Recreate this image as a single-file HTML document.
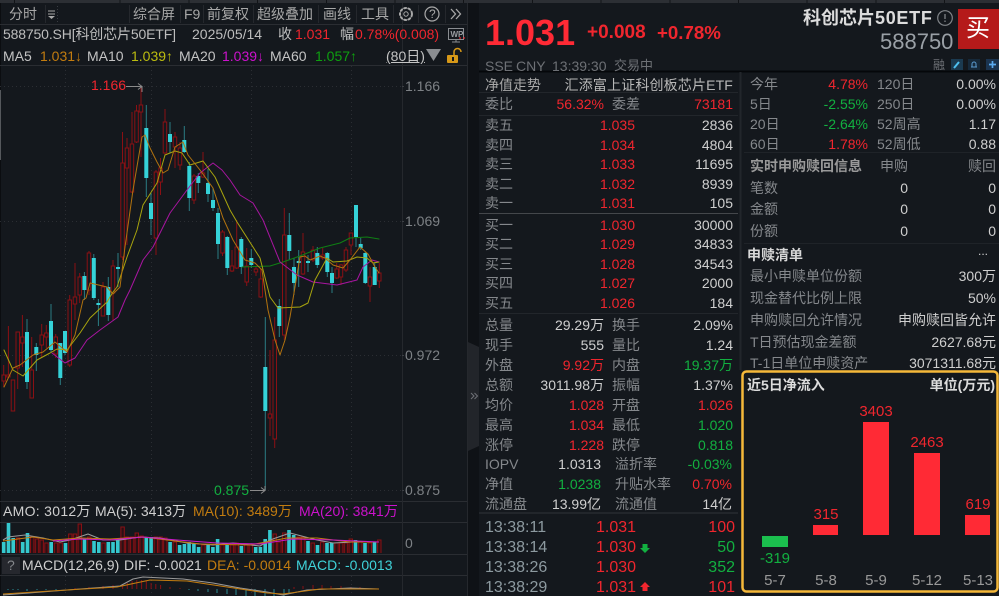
<!DOCTYPE html>
<html lang="zh"><head><meta charset="utf-8"><title>588750</title>
<style>
html,body{margin:0;padding:0;background:#14181d}
#p{position:relative;width:999px;height:596px;overflow:hidden;background:#14181d;font-family:"Liberation Sans","Noto Sans CJK SC",sans-serif;font-size:14px;color:#c8c8c8;filter:blur(.3px)}
#p div.t{position:absolute;white-space:nowrap;line-height:20px;height:20px}
.g{color:#85888c}.w{color:#cfcfcf}.r{color:#f0262e}.n{color:#12b040}.h{color:#a8a8a8}
.o{color:#c27c10}.y{color:#bcbc10}.m{color:#cc12cc}.c{color:#3fd2d8}
.b{font-weight:bold}
svg{position:absolute;left:0;top:0}
</style></head><body><div id="p">
<div style="position:absolute;left:0;top:0;width:999px;height:3px;background:repeating-linear-gradient(90deg,#2c2f34 0,#2c2f34 67.7px,#121417 67.7px,#121417 68.7px);background-position:52px 0"></div>
<div style="position:absolute;left:468px;top:3px;width:11px;height:593px;background:#0f1216"></div>
<div style="position:absolute;left:0;top:3px;width:1px;height:593px;background:#0b0d10"></div>
<div style="position:absolute;left:0;top:90px;width:1px;height:70px;background:#55585c"></div>

<svg width="999" height="596" viewBox="0 0 999 596">
<polygon points="468,342 479,347 479,446 468,451" fill="#22252a"/>
<path d="M0 24.5H467M0 65.5H467M0 501.5H467M0 522.5H467M0 554.5H467M0 575.5H467" stroke="#2a2d32" fill="none"/>
<path d="M402.5 3V596M467.5 3V596M45.5 5V23M129.5 5V23M180.5 5V23M203.5 5V23M253.5 5V23M318.5 5V23M356.5 5V23M393.5 5V23M418.5 5V23M445.5 5V23" stroke="#25282d" fill="none"/>
<path d="M0 86.5H402M0 221.5H402M0 355.5H402M0 490.5H402M65.5 66V501M151.5 66V501M251.5 66V501M351.5 66V501M65.5 523V554M151.5 523V554M251.5 523V554M351.5 523V554M65.5 576V596M151.5 576V596M251.5 576V596M351.5 576V596" stroke="#2b2e33" stroke-dasharray="1 3" fill="none"/>
<path d="M402 86.5h2M402 221.5h2M402 355.5h2M402 490.5h2" stroke="#3c3f44"/>

<!-- red wicks -->
<path fill="none" stroke="#8a1014" d="M3.7 365V387M8.4 326V378M17.7 332V389M22.4 315V367M31.7 337V398M41.7 324V358M46.3 325V348M55.7 334V358M69.7 295V367M75 263V320M79.7 273V303M89 251V295M103 282V316M113 260V320M122.5 132V260M127 138V245M132 112V193M136.5 105V143M141 86V157M156 170V255M160.5 158V195M165 109V155M175 132V168M180 142V170M194 174V204M203 152V178M222.5 230V256M232 250V272M236.7 220V269M246.7 248V286M256 267V276M260.7 268V298M270 350V436M274.7 317V448M284.3 208V340M303 233V275M313 246V262M322.7 248V260M336.7 263V279M341 264V285M346 247V272M351 233V255M370 267V302M379.3 263V288"/>
<!-- red bodies -->
<path fill="#14181d" stroke="#8a1014" d="M2 375h3.5V381h-3.5zM6.6 375h3.5V377h-3.5zM11.2 380h3.5V411h-3.5zM16 332h3.5V368h-3.5zM20.6 337h3.5V343h-3.5zM30 370h3.5V398h-3.5zM40 335h3.5V345h-3.5zM44.6 333h3.5V337h-3.5zM54 337h3.5V354h-3.5zM68 300h3.5V365h-3.5zM73.2 297h3.5V304h-3.5zM78 277h3.5V295h-3.5zM87.2 253h3.5V290h-3.5zM101.2 287h3.5V316h-3.5zM111.2 266h3.5V293h-3.5zM120.8 163h3.5V257h-3.5zM125.2 148h3.5V168h-3.5zM130.2 144h3.5V192h-3.5zM134.8 111h3.5V142h-3.5zM139.2 105h3.5V112h-3.5zM154.2 172h3.5V238h-3.5zM158.8 168h3.5V182h-3.5zM163.2 122h3.5V153h-3.5zM173.2 137h3.5V147h-3.5zM178.2 148h3.5V165h-3.5zM192.2 176h3.5V200h-3.5zM201.2 173h3.5V177h-3.5zM220.8 232h3.5V253h-3.5zM230.2 266h3.5V271h-3.5zM235 247h3.5V268h-3.5zM245 266h3.5V282h-3.5zM254.2 269h3.5V272h-3.5zM259 279h3.5V297h-3.5zM268.2 414h3.5V418h-3.5zM273 340h3.5V439h-3.5zM282.5 235h3.5V335h-3.5zM301.2 252h3.5V274h-3.5zM311.2 250h3.5V260h-3.5zM321 255h3.5V258h-3.5zM335 269h3.5V278h-3.5zM339.2 265h3.5V277h-3.5zM344.2 250h3.5V270h-3.5zM349.2 233h3.5V245h-3.5zM368.2 277h3.5V286h-3.5zM377.5 273h3.5V281h-3.5z"/>
<!-- cyan wicks -->
<path fill="none" stroke="#2a7d84" d="M27 319V389M36.3 343V371M51 304V352M60.3 343V385M65 331V355M84.4 272V300M93.8 254V300M98.4 299V326M108.3 277V321M118 253V287M146.3 105V197M151 193V235M170 122V153M184.3 126V153M189.3 162V211M198.3 173V193M208 169V202M213 188V211M218 208V259M227.3 236V275M241.3 237V274M251.3 249V268M265.3 317V490M279.3 299V337M289.3 213V260M294 258V295M298.7 250V287M308 255V272M317.3 247V268M327.3 252V277M332 267V293M356 205V247M360.7 238V250M365.3 252V284M374.7 263V285"/>
<!-- cyan bodies -->
<path fill="#35d2d8" d="M25 332h4V382h-4zM34.3 347h4V355h-4zM49 321h4V350h-4zM58.3 343h4V378h-4zM63 331h4V353h-4zM82.4 276h4V290h-4zM91.8 258h4V298h-4zM96.4 303h4V305h-4zM106.3 287h4V315h-4zM116 267h4V269h-4zM144.3 128h4V178h-4zM149 203h4V219h-4zM168 134h4V142h-4zM182.3 140h4V152h-4zM187.3 166h4V198h-4zM196.3 176h4V183h-4zM206 183h4V194h-4zM211 200h4V208h-4zM216 213h4V244h-4zM225.3 237h4V268h-4zM239.3 239h4V267h-4zM249.3 258h4V265h-4zM263.3 367h4V411h-4zM277.3 306h4V326h-4zM287.3 235h4V251h-4zM292 267h4V283h-4zM296.7 261h4V263h-4zM306 261h4V263h-4zM315.3 253h4V265h-4zM325.3 253h4V272h-4zM330 273h4V283h-4zM354 205h4V237h-4zM358.7 244h4V248h-4zM363.3 253h4V283h-4zM372.7 267h4V285h-4z"/>
<!-- MA lines -->
<g fill="none" stroke-width="1" stroke-linejoin="round" stroke-linecap="round">
<polyline stroke="#0f7f14" points="242,267 270,266 283,262 300,256 320,248 340,243 350,238 367,237 379,239"/>
<polyline stroke="#a815a0" points="52,353 65,363 75,358 87,340 100,330 118,317 125,300 130,290 143,260 153,247 170,213 187,190 200,173 213,163 222,170 230,180 240,195 253,203 263,220 280,262 297,275 313,282 337,285 357,280 363,267 372,260 379,262"/>
<polyline stroke="#a8a40e" points="4,350 13,370 23,376 37,360 50,353 57,349 67,350 80,333 90,318 107,302 113,292 117,287 127,257 137,230 143,205 157,183 165,155 175,151 182,153 190,165 203,161 215,177 230,210 237,222 260,258 270,297 278,308 300,307 308,303 315,280 327,258 333,262 347,261 357,257 367,258 373,263 379,262"/>
<polyline stroke="#b1720f" points="4,387 13,368 20,365 33,355 43,352 55,342 67,352 75,335 83,300 86,298 90,283 107,287 113,294 120,287 125,247 133,190 142,137 145,135 150,148 157,162 163,173 168,170 175,147 183,142 188,155 200,170 213,188 223,218 233,240 245,260 255,263 262,270 268,310 275,340 280,355 285,340 290,317 300,257 305,256 310,260 320,256 325,258 333,265 343,268 350,260 360,247 368,254 375,267 379,273"/>
</g>
<!-- arrows -->
<path d="M126 86.5H142V92M138 83.5L142 86.5L138 89.5" fill="none" stroke="#8a8a8a"/>
<path d="M250 490.5H265V486M261 487.5L265 490.5L261 493.5" fill="none" stroke="#8a8a8a"/>
<!-- volume -->
<path fill="none" stroke="#35c8ce" stroke-width="3.6" d="M3.7 553V542M8.5 553V523M13.2 553V538M22.7 553V542M27.5 553V533M51.2 553V542M65.5 553V543M84.5 553V539M94 553V541M98.8 553V542M108.3 553V542M113 553V542M117.8 553V539M146.3 553V537M151.1 553V537M170.1 553V542M179.6 553V545M184.4 553V544M189.1 553V542M193.9 553V544M198.6 553V547M208.1 553V545M212.9 553V547M217.6 553V539M227.1 553V545M241.4 553V546M255.7 553V547M260.4 553V547M265.2 553V539M269.9 553V530M289 553V530M293.7 553V535M308 553V541M317.5 553V545M327 553V543M331.7 553V543M355.5 553V540M365 553V543M374.5 553V542"/>
<path fill="#2c1014" stroke="#8a1014" d="M16.3 553V538h3.4V553M30.5 553V537h3.4V553M35.3 553V539h3.4V553M40 553V540h3.4V553M44.8 553V543h3.4V553M54.3 553V543h3.4V553M59 553V543h3.4V553M68.6 553V534h3.4V553M73.3 553V534h3.4V553M78.1 553V524h3.4V553M87.6 553V537h3.4V553M101.8 553V543h3.4V553M120.9 553V527h3.4V553M125.6 553V537h3.4V553M130.4 553V537h3.4V553M135.1 553V533h3.4V553M139.9 553V536h3.4V553M154.1 553V537h3.4V553M158.9 553V537h3.4V553M163.6 553V538h3.4V553M173.1 553V542h3.4V553M201.7 553V545h3.4V553M220.7 553V545h3.4V553M230.2 553V545h3.4V553M235 553V543h3.4V553M244.5 553V545h3.4V553M249.2 553V545h3.4V553M273 553V534h3.4V553M277.7 553V542h3.4V553M282.5 553V533h3.4V553M296.8 553V537h3.4V553M301.5 553V537h3.4V553M311 553V543h3.4V553M320.5 553V542h3.4V553M334.8 553V543h3.4V553M339.5 553V543h3.4V553M344.3 553V543h3.4V553M349.1 553V539h3.4V553M358.6 553V542h3.4V553M368.1 553V543h3.4V553M377.6 553V540h3.4V553"/>
<g fill="none" stroke-width="1.1" stroke-linejoin="round">
<polyline stroke="#9a9a9a" points="3,540 8,537 25,535 43,538 60,542 70,540 88,534 103,540 120,540 140,537 160,538 187,543 213,545 233,543 260,546 270,540 290,533 317,540 333,543 353,542 379,542"/>
<polyline stroke="#c27c10" points="3,541 33,537 53,540 80,538 110,539 143,537 167,540 200,544 250,545 287,538 317,538 350,542 379,542"/>
<polyline stroke="#c818c8" points="53,541 80,539 110,540 143,537 177,540 217,543 260,544 293,539 333,540 379,542"/>
</g>
<!-- macd -->
<path fill="none" stroke="#8a1014" d="M75 589V588M89 589V587M103 589V586M113 589V585M122.6 589V584M127.3 589V583M132.1 589V581M136.8 589V580M141.6 589V580M146.3 589V581M151.1 589V583M155.8 589V584M160.6 589V585M170 589V587M180 589V588M294 589V587M303 589V586M313 589V585M322 589V585M331 589V586M341 589V586M351 589V587M360 589V587"/>
<path fill="none" stroke="#2a8d92" d="M8 589V590M13 589V590M18 589V590M27 589V591M37 589V590M46 589V590M56 589V590M189 589V590M198 589V591M208 589V592M217 589V593M227 589V594M236 589V595M246 589V596M255 589V596M265 589V596M274 589V596M284 589V596M289 589V593"/>
<g fill="none" stroke-width="1.1" stroke-linejoin="round">
<polyline stroke="#9a9a9a" points="3,595 67,590 120,586 133,579 143,577 183,579 213,583 240,588 267,592 283,595 307,590 350,588 379,589"/>
<polyline stroke="#c27c10" points="3,594 67,590 117,587 150,580 187,581 227,587 267,593 283,594 320,589 379,589"/>
</g>
<!-- toolbar icons -->
<path d="M48 11h7M48 14h7" stroke="#a8a8a8" fill="none"/><polygon points="48,16 55,16 51.5,19" fill="#a8a8a8"/>
<path d="M57.5 6V23" stroke="#3a3d42" stroke-dasharray="1 2"/>
<circle cx="406" cy="14" r="6" fill="none" stroke="#a8a8a8" stroke-width="2" stroke-dasharray="3 1.3"/><circle cx="406" cy="14" r="6" fill="none" stroke="#a8a8a8" stroke-width=".8"/><circle cx="406" cy="14" r="2.2" fill="none" stroke="#a8a8a8"/>
<circle cx="432" cy="14" r="7" fill="none" stroke="#a8a8a8" stroke-width="1.2"/>
<path d="M451 9l4.500 5l-4.500 5M456 9l4.500 5l-4.500 5" fill="none" stroke="#a8a8a8" stroke-width="1.3"/>
<!-- WP monitor -->
<rect x="448.500" y="28.500" width="15" height="11" fill="none" stroke="#8a8d91"/>
<text x="450.500" y="37" font-family="Liberation Sans" font-size="8" font-weight="bold" fill="#9a9da1">WP</text>
<path d="M452 42h8M456 40v2" stroke="#8a8d91" fill="none"/>
<circle cx="460" cy="38" r="0.9" fill="#f0262e"/><circle cx="464" cy="38" r="0.9" fill="#f0262e"/>
<!-- triangle & lock -->
<polygon points="426,49 441,49 433.500,61" fill="#8a8d91"/>
<rect x="447" y="55" width="11" height="8" rx="1" fill="#d69818"/><rect x="452" y="57" width="2" height="4" fill="#14181d"/>
<path d="M454 55v-3a3.500 3.500 0 0 1 7 0" fill="none" stroke="#d69818" stroke-width="1.500"/>
<!-- panel handle arrows -->
<path d="M471 393l3 3l-3 3M474.500 393l3 3l-3 3" fill="none" stroke="#6f7277"/>
<!-- help -->
<rect x="2" y="557" width="18" height="17" fill="#26282e"/>
<!-- right header -->
<rect x="958" y="9" width="41" height="40" fill="#b51a1a"/>
<circle cx="945" cy="18" r="7.300" fill="none" stroke="#808488" stroke-width="1.200"/>
<path d="M945 14v5M945 20.500v1.500" stroke="#808488" stroke-width="1.300"/>
<rect x="951" y="59" width="12" height="11" fill="#1b3a50"/><path d="M954 68l5-6" stroke="#4dc0f0" stroke-width="2"/>
<rect x="968" y="59" width="12" height="11" fill="#16293a"/><path d="M971 67h6M972 67v-3a2 2 0 0 1 4 0v3" fill="none" stroke="#5a9ad0"/>
<rect x="986" y="59" width="13" height="11" fill="#1b3450"/><path d="M992.500 61v7M989 64.500h7" stroke="#5aaaf0" stroke-width="1.700"/>
<!-- right panel lines -->
<path d="M479 71.500H999" stroke="#05070a" stroke-width="2"/>
<path d="M740.500 72V370" stroke="#22262b" stroke-width="2"/>
<path d="M479 92.500H738" stroke="#22262b"/><path d="M479 115.500H738" stroke="#22262b"/><path d="M479 213.500H738" stroke="#44474b"/><path d="M479 313.500H738" stroke="#22262b"/><path d="M479 513H738" stroke="#22262b" stroke-width="2"/>
<path d="M744 152.500H999M744 243.500H999" stroke="#1f2328"/>
<!-- box -->
<rect x="742.500" y="371.500" width="255" height="220" rx="4" fill="#14181d" stroke="#f5b83a" stroke-width="2.500"/>
<rect x="762" y="536" width="26" height="11" fill="#1bbf4e"/>
<rect x="813" y="525" width="25" height="10" fill="#ff2a35"/>
<rect x="863" y="422" width="26" height="113" fill="#ff2a35"/>
<rect x="914" y="453" width="26" height="82" fill="#ff2a35"/>
<rect x="965" y="515" width="25" height="20" fill="#ff2a35"/>
<polygon points="640,548 645,553 650,548 647.500,548 647.500,544 642.500,544 642.500,548" fill="#12b040"/>
<polygon points="640,587 645,582 650,587 647.500,587 647.500,591 642.500,591 642.500,587" fill="#f0262e"/>
</svg>

<!-- toolbar -->
<div class="t h" style="left:9px;top:4px">分时</div>
<div class="t h" style="left:133px;top:4px">综合屏</div>
<div class="t h" style="left:184px;top:4px">F9</div>
<div class="t h" style="left:207px;top:4px">前复权</div>
<div class="t h" style="left:257px;top:4px">超级叠加</div>
<div class="t h" style="left:323px;top:4px">画线</div>
<div class="t h" style="left:361px;top:4px">工具</div>
<div class="t h" style="left:429px;top:4px;font-size:12px">?</div>
<!-- row 2 -->
<div class="t" style="left:3px;top:24px;color:#bdbdbd;letter-spacing:-.15px">588750.SH[科创芯片50ETF]</div>
<div class="t" style="left:192px;top:24px;color:#bdbdbd">2025/05/14</div>
<div class="t" style="left:278px;top:24px;color:#bdbdbd">收</div>
<div class="t r" style="left:295px;top:24px">1.031</div>
<div class="t" style="left:340px;top:24px;color:#bdbdbd">幅</div>
<div class="t r" style="left:355px;top:24px">0.78%(0.008)</div>
<!-- row 3 -->
<div class="t" style="left:3px;top:46px;color:#c4c4c4">MA5</div>
<div class="t o" style="left:40px;top:46px">1.031↓</div>
<div class="t" style="left:87px;top:46px;color:#c4c4c4">MA10</div>
<div class="t y" style="left:131px;top:46px">1.039↑</div>
<div class="t" style="left:179px;top:46px;color:#c4c4c4">MA20</div>
<div class="t m" style="left:222px;top:46px">1.039↓</div>
<div class="t" style="left:270px;top:46px;color:#c4c4c4">MA60</div>
<div class="t" style="left:315px;top:46px;color:#0ea010">1.057↑</div>
<div class="t" style="left:386px;top:46px;color:#c4c4c4;text-decoration:underline">(80日)</div>
<!-- chart labels -->
<div class="t r" style="left:91px;top:75px">1.166</div>
<div class="t n" style="left:214px;top:480px">0.875</div>
<div class="t" style="left:405px;top:76px;color:#7d8185">1.166</div>
<div class="t" style="left:405px;top:211px;color:#7d8185">1.069</div>
<div class="t" style="left:405px;top:345px;color:#7d8185">0.972</div>
<div class="t" style="left:405px;top:480px;color:#7d8185">0.875</div>
<div class="t" style="left:405px;top:533px;color:#7d8185">0</div>
<!-- AMO -->
<div class="t w" style="left:3px;top:501px;letter-spacing:.3px">AMO: 3012万</div>
<div class="t w" style="left:95px;top:501px">MA(5): 3413万</div>
<div class="t o" style="left:193px;top:501px">MA(10): 3489万</div>
<div class="t m" style="left:299px;top:501px">MA(20): 3841万</div>
<!-- MACD -->
<div class="t g" style="left:7px;top:555px">?</div>
<div class="t w" style="left:22px;top:555px">MACD(12,26,9)</div>
<div class="t w" style="left:124px;top:555px">DIF: -0.0021</div>
<div class="t o" style="left:207px;top:555px">DEA: -0.0014</div>
<div class="t c" style="left:296px;top:555px">MACD: -0.0013</div>

<!-- right header -->
<div class="t b" style="left:485px;top:23px;font-size:36px;color:#ff2a35">1.031</div>
<div class="t b" style="left:587px;top:23px;font-size:19px;color:#f0262e">+0.008</div>
<div class="t b" style="left:657px;top:23px;font-size:18.700px;color:#f0262e">+0.78%</div>
<div class="t b" style="left:803px;top:8px;font-size:18px;color:#dcdcdc">科创芯片<span style="letter-spacing:.7px">50ETF</span></div>
<div class="t" style="left:880px;top:32px;font-size:22px;color:#9aa0a6">588750</div>
<div class="t" style="left:966px;top:19px;font-size:24px;color:#fff">买</div>
<div class="t" style="left:485px;top:56px;color:#6d7075">SSE</div>
<div class="t" style="left:516px;top:56px;color:#6d7075">CNY</div>
<div class="t" style="left:552px;top:56px;color:#6d7075">13:39:30</div>
<div class="t" style="left:614px;top:56px;color:#6d7075;font-size:13px">交易中</div>
<div class="t" style="left:933px;top:55px;color:#6d7075;font-size:12px">融</div>

<!-- left table -->
<div class="t h" style="left:485px;top:75px">净值走势</div>
<div class="t" style="right:266px;top:75px;color:#b8b8b8;letter-spacing:.15px">汇添富上证科创板芯片ETF</div>
<div class="t g" style="left:485px;top:94px">委比</div><div class="t r" style="right:395px;top:94px">56.32%</div>
<div class="t g" style="left:612px;top:94px">委差</div><div class="t r" style="right:266px;top:94px">73181</div>

<div class="t g" style="left:485px;top:115px">卖五</div><div class="t r" style="right:364px;top:115px">1.035</div><div class="t w" style="right:266px;top:115px">2836</div>
<div class="t g" style="left:485px;top:135px">卖四</div><div class="t r" style="right:364px;top:135px">1.034</div><div class="t w" style="right:266px;top:135px">4804</div>
<div class="t g" style="left:485px;top:154px">卖三</div><div class="t r" style="right:364px;top:154px">1.033</div><div class="t w" style="right:266px;top:154px">11695</div>
<div class="t g" style="left:485px;top:174px">卖二</div><div class="t r" style="right:364px;top:174px">1.032</div><div class="t w" style="right:266px;top:174px">8939</div>
<div class="t g" style="left:485px;top:193px">卖一</div><div class="t r" style="right:364px;top:193px">1.031</div><div class="t w" style="right:266px;top:193px">105</div>
<div class="t g" style="left:485px;top:215px">买一</div><div class="t r" style="right:364px;top:215px">1.030</div><div class="t w" style="right:266px;top:215px">30000</div>
<div class="t g" style="left:485px;top:234px">买二</div><div class="t r" style="right:364px;top:234px">1.029</div><div class="t w" style="right:266px;top:234px">34833</div>
<div class="t g" style="left:485px;top:254px">买三</div><div class="t r" style="right:364px;top:254px">1.028</div><div class="t w" style="right:266px;top:254px">34543</div>
<div class="t g" style="left:485px;top:273px">买四</div><div class="t r" style="right:364px;top:273px">1.027</div><div class="t w" style="right:266px;top:273px">2000</div>
<div class="t g" style="left:485px;top:293px">买五</div><div class="t r" style="right:364px;top:293px">1.026</div><div class="t w" style="right:266px;top:293px">184</div>

<div class="t g" style="left:485px;top:315px">总量</div><div class="t w" style="right:395px;top:315px">29.29万</div><div class="t g" style="left:612px;top:315px">换手</div><div class="t w" style="right:266px;top:315px">2.09%</div>
<div class="t g" style="left:485px;top:335px">现手</div><div class="t w" style="right:395px;top:335px">555</div><div class="t g" style="left:612px;top:335px">量比</div><div class="t w" style="right:266px;top:335px">1.24</div>
<div class="t g" style="left:485px;top:355px">外盘</div><div class="t r" style="right:395px;top:355px">9.92万</div><div class="t g" style="left:612px;top:355px">内盘</div><div class="t n" style="right:266px;top:355px">19.37万</div>
<div class="t g" style="left:485px;top:375px">总额</div><div class="t w" style="right:395px;top:375px">3011.98万</div><div class="t g" style="left:612px;top:375px">振幅</div><div class="t w" style="right:266px;top:375px">1.37%</div>
<div class="t g" style="left:485px;top:395px">均价</div><div class="t r" style="right:395px;top:395px">1.028</div><div class="t g" style="left:612px;top:395px">开盘</div><div class="t r" style="right:266px;top:395px">1.026</div>
<div class="t g" style="left:485px;top:415px">最高</div><div class="t r" style="right:395px;top:415px">1.034</div><div class="t g" style="left:612px;top:415px">最低</div><div class="t n" style="right:266px;top:415px">1.020</div>
<div class="t g" style="left:485px;top:435px">涨停</div><div class="t r" style="right:395px;top:435px">1.228</div><div class="t g" style="left:612px;top:435px">跌停</div><div class="t n" style="right:266px;top:435px">0.818</div>
<div class="t g" style="left:485px;top:454px">IOPV</div><div class="t w" style="right:398px;top:454px">1.0313</div><div class="t g" style="left:615px;top:454px">溢折率</div><div class="t n" style="right:267px;top:454px">-0.03%</div>
<div class="t g" style="left:485px;top:474px">净值</div><div class="t n" style="right:398px;top:474px">1.0238</div><div class="t g" style="left:615px;top:474px">升贴水率</div><div class="t r" style="right:267px;top:474px">0.70%</div>
<div class="t g" style="left:485px;top:494px">流通盘</div><div class="t w" style="right:398px;top:494px">13.99亿</div><div class="t g" style="left:615px;top:494px">流通值</div><div class="t w" style="right:267px;top:494px">14亿</div>

<div class="t" style="left:485px;top:518px;font-size:16px;color:#8d9aa0">13:38:11</div><div class="t r" style="left:596px;top:518px;font-size:16px">1.031</div><div class="t r" style="right:264px;top:518px;font-size:16px">100</div>
<div class="t" style="left:485px;top:538px;font-size:16px;color:#8d9aa0">13:38:14</div><div class="t r" style="left:596px;top:538px;font-size:16px">1.030</div><div class="t n" style="right:264px;top:538px;font-size:16px">50</div>
<div class="t" style="left:485px;top:558px;font-size:16px;color:#8d9aa0">13:38:26</div><div class="t r" style="left:596px;top:558px;font-size:16px">1.030</div><div class="t n" style="right:264px;top:558px;font-size:16px">352</div>
<div class="t" style="left:485px;top:578px;font-size:16px;color:#8d9aa0">13:38:29</div><div class="t r" style="left:596px;top:578px;font-size:16px">1.031</div><div class="t r" style="right:264px;top:578px;font-size:16px">101</div>

<!-- right table -->
<div class="t g" style="left:750px;top:74px">今年</div><div class="t r" style="right:131px;top:74px">4.78%</div><div class="t g" style="left:877px;top:74px">120日</div><div class="t w" style="right:3px;top:74px">0.00%</div>
<div class="t g" style="left:750px;top:94px">5日</div><div class="t n" style="right:131px;top:94px">-2.55%</div><div class="t g" style="left:877px;top:94px">250日</div><div class="t w" style="right:3px;top:94px">0.00%</div>
<div class="t g" style="left:750px;top:114px">20日</div><div class="t n" style="right:131px;top:114px">-2.64%</div><div class="t g" style="left:877px;top:114px">52周高</div><div class="t w" style="right:3px;top:114px">1.17</div>
<div class="t g" style="left:750px;top:134px">60日</div><div class="t r" style="right:131px;top:134px">1.78%</div><div class="t g" style="left:877px;top:134px">52周低</div><div class="t w" style="right:3px;top:134px">0.88</div>
<div class="t b" style="left:750px;top:156px;color:#999">实时申购赎回信息</div><div class="t g" style="right:91px;top:156px">申购</div><div class="t g" style="right:3px;top:156px">赎回</div>
<div class="t g" style="left:750px;top:178px">笔数</div><div class="t w" style="right:91px;top:178px">0</div><div class="t w" style="right:3px;top:178px">0</div>
<div class="t g" style="left:750px;top:199px">金额</div><div class="t w" style="right:91px;top:199px">0</div><div class="t w" style="right:3px;top:199px">0</div>
<div class="t g" style="left:750px;top:221px">份额</div><div class="t w" style="right:91px;top:221px">0</div><div class="t w" style="right:3px;top:221px">0</div>
<div class="t b" style="left:747px;top:245px;color:#d8d8d8">申赎清单</div><div class="t w" style="left:978px;top:241px;font-size:12px">...</div>
<div class="t g" style="left:750px;top:266px">最小申赎单位份额</div><div class="t w" style="right:3px;top:266px">300万</div>
<div class="t g" style="left:750px;top:288px">现金替代比例上限</div><div class="t w" style="right:3px;top:288px">50%</div>
<div class="t g" style="left:750px;top:310px">申购赎回允许情况</div><div class="t w" style="right:3px;top:310px">申购赎回皆允许</div>
<div class="t g" style="left:750px;top:332px">T日预估现金差额</div><div class="t w" style="right:3px;top:332px">2627.68元</div>
<div class="t g" style="left:750px;top:353px;height:16px;overflow:hidden">T-1日单位申赎资产</div><div class="t w" style="right:3px;top:353px;height:16px;overflow:hidden">3071311.68元</div>

<!-- box text -->
<div class="t b" style="left:747px;top:375px;color:#dcdcdc">近5日净流入</div>
<div class="t b" style="right:4px;top:375px;color:#dcdcdc">单位(万元)</div>
<div class="t" style="left:846px;width:60px;text-align:center;top:402px;font-size:15px;color:#f0262e">3403</div>
<div class="t" style="left:897px;width:60px;text-align:center;top:433px;font-size:15px;color:#f0262e">2463</div>
<div class="t" style="left:796px;width:60px;text-align:center;top:505px;font-size:15px;color:#f0262e">315</div>
<div class="t" style="left:948px;width:60px;text-align:center;top:495px;font-size:15px;color:#f0262e">619</div>
<div class="t n" style="left:745px;width:60px;text-align:center;top:549px;font-size:15px">-319</div>
<div class="t" style="left:745px;width:60px;text-align:center;top:571px;font-size:15px;color:#999">5-7</div>
<div class="t" style="left:796px;width:60px;text-align:center;top:571px;font-size:15px;color:#999">5-8</div>
<div class="t" style="left:846px;width:60px;text-align:center;top:571px;font-size:15px;color:#999">5-9</div>
<div class="t" style="left:897px;width:60px;text-align:center;top:571px;font-size:15px;color:#999">5-12</div>
<div class="t" style="left:948px;width:60px;text-align:center;top:571px;font-size:15px;color:#999">5-13</div>
</div></body></html>
